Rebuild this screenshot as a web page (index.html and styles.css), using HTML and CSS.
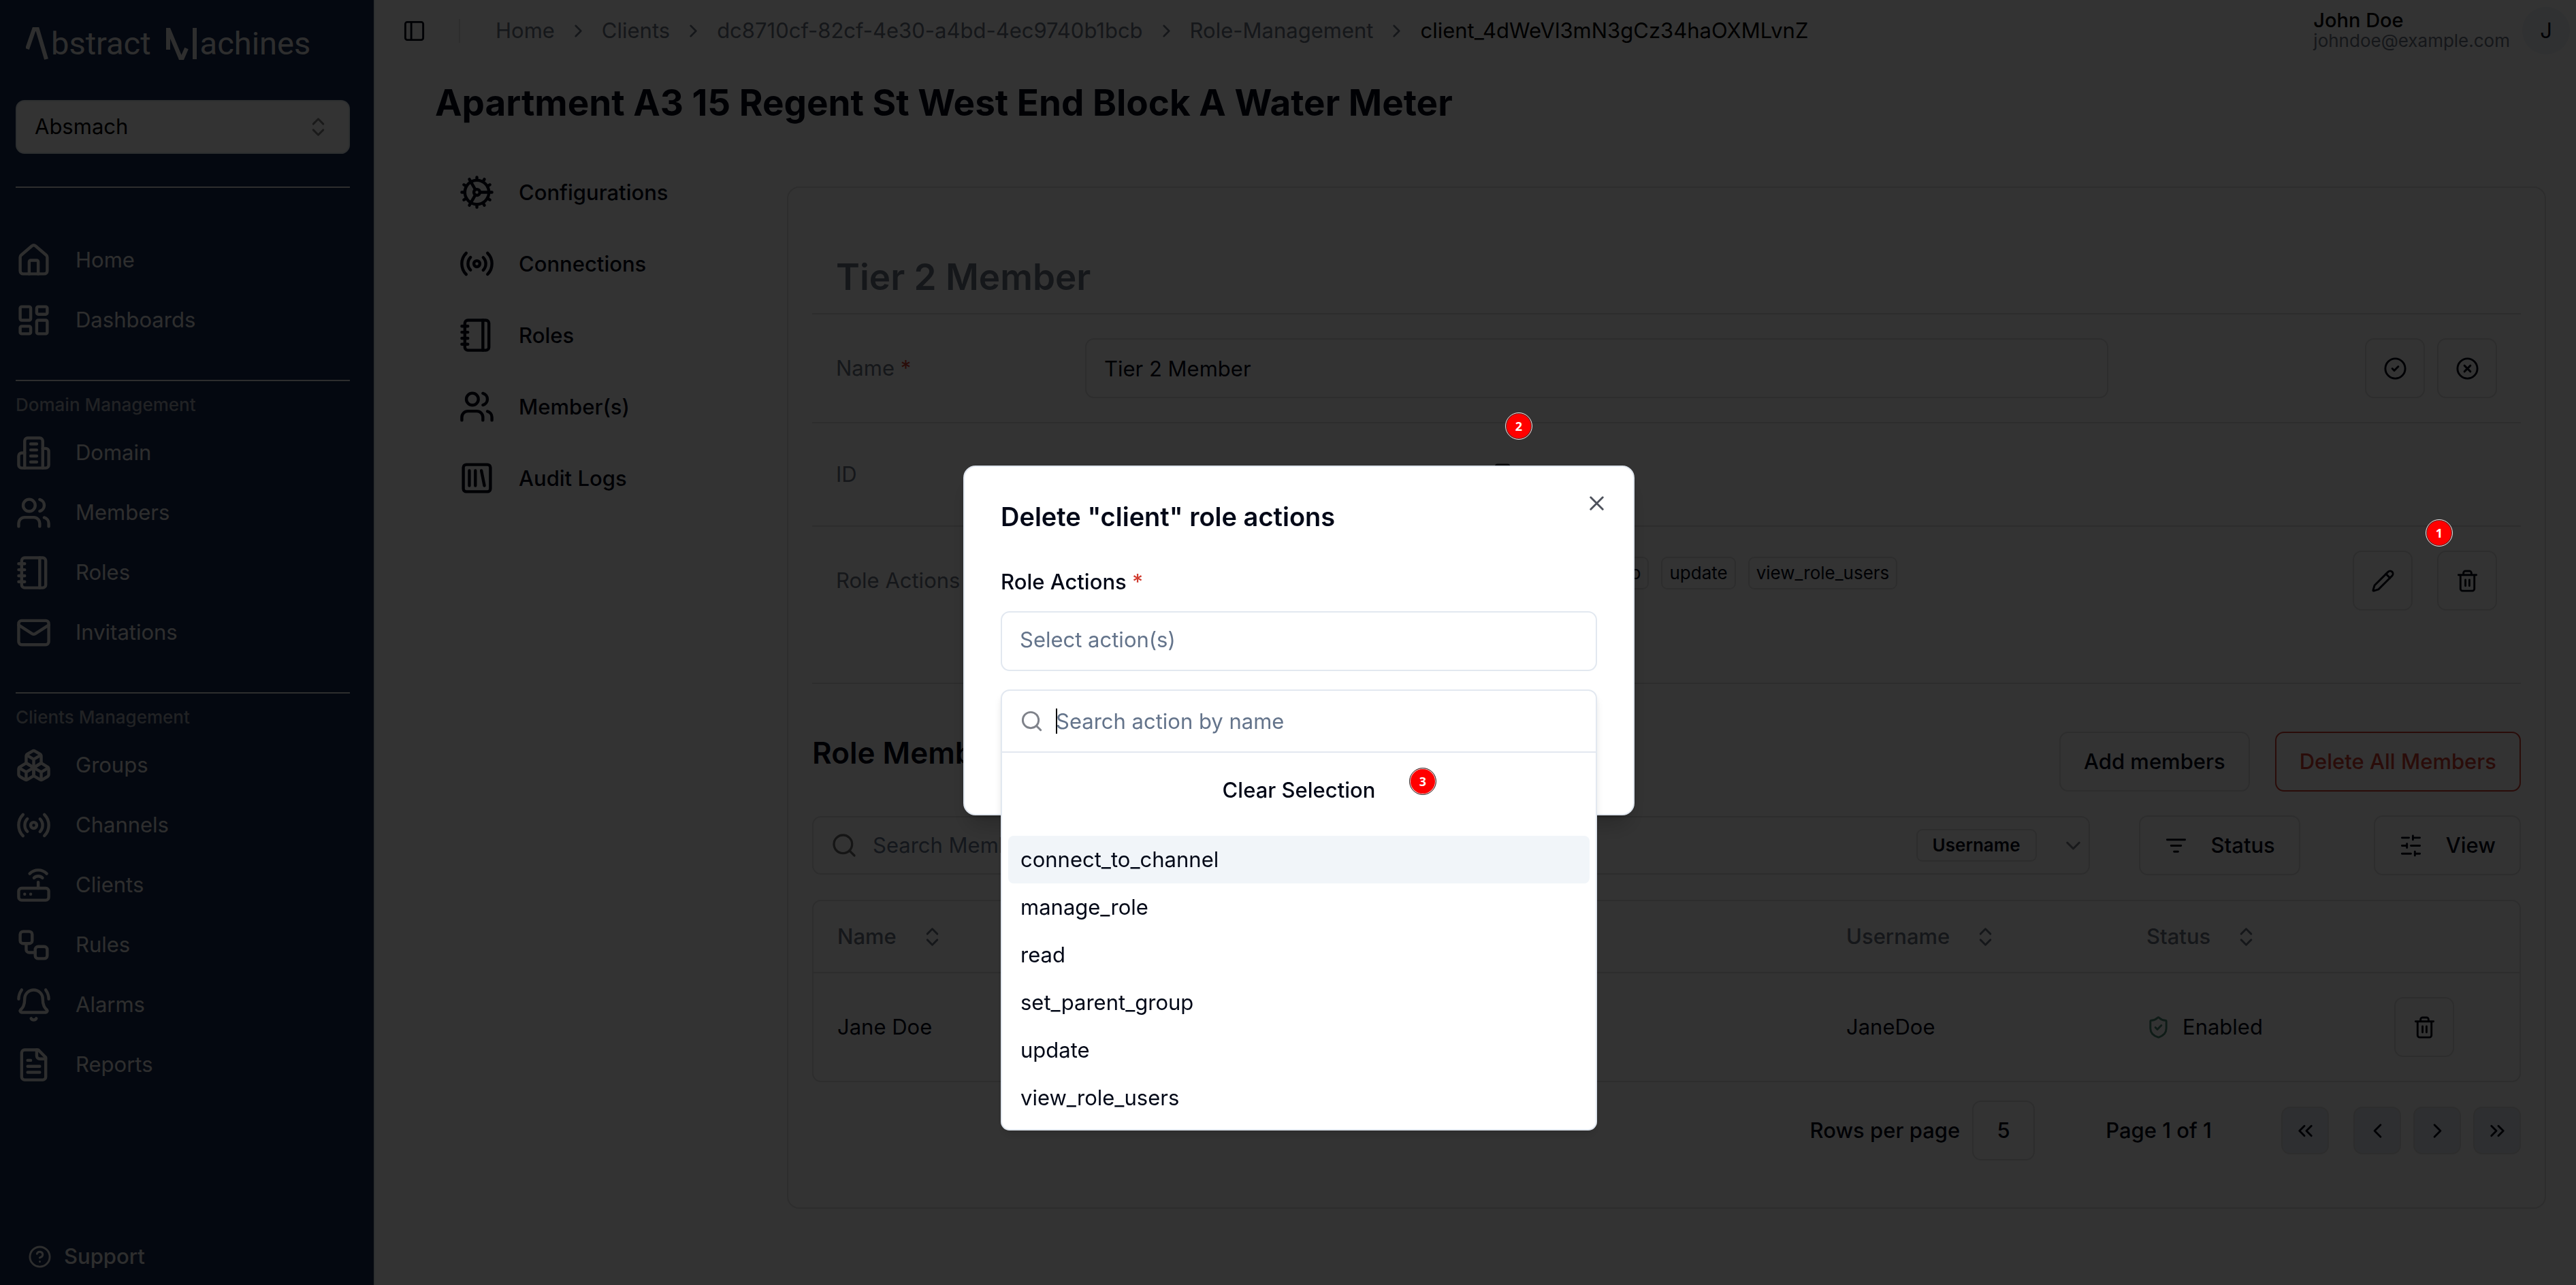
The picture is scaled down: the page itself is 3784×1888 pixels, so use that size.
FILE: index.html
```html
<!DOCTYPE html>
<html lang="en">
<head>
<meta charset="utf-8">
<title>Role actions</title>
<link rel="stylesheet" href="styles.css">
</head>
<body>
<svg width="0" height="0" class="sprite" aria-hidden="true">
  <symbol id="house" viewBox="0 0 24 24"><path d="M15 21v-8a1 1 0 0 0-1-1h-4a1 1 0 0 0-1 1v8"/><path d="M3 10a2 2 0 0 1 .709-1.528l7-5.999a2 2 0 0 1 2.582 0l7 5.999A2 2 0 0 1 21 10v9a2 2 0 0 1-2 2H5a2 2 0 0 1-2-2z"/></symbol>
  <symbol id="dashboard" viewBox="0 0 24 24"><rect width="7" height="9" x="3" y="3" rx="1"/><rect width="7" height="5" x="14" y="3" rx="1"/><rect width="7" height="9" x="14" y="12" rx="1"/><rect width="7" height="5" x="3" y="16" rx="1"/></symbol>
  <symbol id="building" viewBox="0 0 24 24"><path d="M6 22V4a2 2 0 0 1 2-2h8a2 2 0 0 1 2 2v18Z"/><path d="M6 12H4a2 2 0 0 0-2 2v6a2 2 0 0 0 2 2h2"/><path d="M18 9h2a2 2 0 0 1 2 2v9a2 2 0 0 1-2 2h-2"/><path d="M10 6h4M10 10h4M10 14h4M10 18h4"/></symbol>
  <symbol id="users" viewBox="0 0 24 24"><path d="M16 21v-2a4 4 0 0 0-4-4H6a4 4 0 0 0-4 4v2"/><circle cx="9" cy="7" r="4"/><path d="M22 21v-2a4 4 0 0 0-3-3.87"/><path d="M16 3.13a4 4 0 0 1 0 7.75"/></symbol>
  <symbol id="notebook" viewBox="0 0 24 24"><path d="M2 6h4M2 10h4M2 14h4M2 18h4"/><rect width="16" height="20" x="4" y="2" rx="2"/><path d="M16 2v20"/></symbol>
  <symbol id="mail" viewBox="0 0 24 24"><rect width="20" height="16" x="2" y="4" rx="2"/><path d="m22 7-8.97 5.7a1.94 1.94 0 0 1-2.06 0L2 7"/></symbol>
  <symbol id="boxes" viewBox="0 0 24 24"><path d="M2.97 12.92A2 2 0 0 0 2 14.63v3.24a2 2 0 0 0 .97 1.71l3 1.8a2 2 0 0 0 2.06 0L12 19v-5.5l-5-3-4.03 2.42Z"/><path d="m7 16.5-4.74-2.85M7 16.5l5-3M7 16.5v5.17"/><path d="M12 13.5V19l3.97 2.38a2 2 0 0 0 2.06 0l3-1.8a2 2 0 0 0 .97-1.71v-3.24a2 2 0 0 0-.97-1.71L17 10.5l-5 3Z"/><path d="m17 16.5-5-3M17 16.5l4.74-2.85M17 16.5v5.17"/><path d="M7.97 4.42A2 2 0 0 0 7 6.13v4.37l5 3 5-3V6.13a2 2 0 0 0-.97-1.71l-3-1.8a2 2 0 0 0-2.06 0l-3 1.8Z"/><path d="M12 8 7.26 5.15M12 8l4.74-2.85M12 13.5V8"/></symbol>
  <symbol id="radio" viewBox="0 0 24 24"><path d="M4.9 19.1C1 15.2 1 8.8 4.9 4.9"/><path d="M7.8 16.2c-2.3-2.3-2.3-6.1 0-8.5"/><circle cx="12" cy="12" r="2"/><path d="M16.2 7.8c2.3 2.3 2.3 6.1 0 8.5"/><path d="M19.1 4.9C23 8.8 23 15.1 19.1 19"/></symbol>
  <symbol id="router" viewBox="0 0 24 24"><rect width="20" height="8" x="2" y="14" rx="2"/><path d="M6.01 18H6M10.01 18H10M15 10v4"/><path d="M17.84 7.17a4 4 0 0 0-5.66 0"/><path d="M20.66 4.34a8 8 0 0 0-11.31 0"/></symbol>
  <symbol id="workflow" viewBox="0 0 24 24"><rect width="8" height="8" x="3" y="3" rx="2"/><path d="M7 11v4a2 2 0 0 0 2 2h4"/><rect width="8" height="8" x="13" y="13" rx="2"/></symbol>
  <symbol id="bell" viewBox="0 0 24 24"><path d="M10.268 21a2 2 0 0 0 3.464 0"/><path d="M22 8c0-2.3-.8-4.3-2-6"/><path d="M3.262 15.326A1 1 0 0 0 4 17h16a1 1 0 0 0 .74-1.673C19.41 13.956 18 12.499 18 8A6 6 0 0 0 6 8c0 4.499-1.411 5.956-2.738 7.326"/><path d="M4 2C2.8 3.7 2 5.7 2 8"/></symbol>
  <symbol id="file" viewBox="0 0 24 24"><path d="M15 2H6a2 2 0 0 0-2 2v16a2 2 0 0 0 2 2h12a2 2 0 0 0 2-2V7Z"/><path d="M14 2v4a2 2 0 0 0 2 2h4"/><path d="M10 9H8M16 13H8M16 17H8"/></symbol>
  <symbol id="help" viewBox="0 0 24 24"><circle cx="12" cy="12" r="10"/><path d="M9.09 9a3 3 0 0 1 5.83 1c0 2-3 3-3 3M12 17h.01"/></symbol>
  <symbol id="updown" viewBox="0 0 24 24"><path d="m7 15 5 5 5-5"/><path d="m7 9 5-5 5 5"/></symbol>
  <symbol id="panel" viewBox="0 0 24 24"><rect width="18" height="18" x="3" y="3" rx="2"/><path d="M9 3v18"/></symbol>
  <symbol id="right" viewBox="0 0 24 24"><path d="m9 18 6-6-6-6"/></symbol>
  <symbol id="left" viewBox="0 0 24 24"><path d="m15 18-6-6 6-6"/></symbol>
  <symbol id="down" viewBox="0 0 24 24"><path d="m6 9 6 6 6-6"/></symbol>
  <symbol id="first" viewBox="0 0 24 24"><path d="m11 17-5-5 5-5"/><path d="m18 17-5-5 5-5"/></symbol>
  <symbol id="last" viewBox="0 0 24 24"><path d="m6 17 5-5-5-5"/><path d="m13 17 5-5-5-5"/></symbol>
  <symbol id="cog" viewBox="0 0 24 24"><path d="M12 20a8 8 0 1 0 0-16 8 8 0 0 0 0 16Z"/><path d="M12 14a2 2 0 1 0 0-4 2 2 0 0 0 0 4Z"/><path d="M12 2v2M12 22v-2M17 20.66l-1-1.73M11 10.27 7 3.34M20.66 17l-1.73-1M3.34 7l1.73 1M14 12h8M2 12h2M20.66 7l-1.73 1M3.34 17l1.73-1M17 3.34l-1 1.73M11 13.73l-4 6.93"/></symbol>
  <symbol id="library" viewBox="0 0 24 24"><rect width="18" height="18" x="3" y="3" rx="2"/><path d="M7 7v10M11 7v10M15 7l2 10"/></symbol>
  <symbol id="check" viewBox="0 0 24 24"><circle cx="12" cy="12" r="10"/><path d="m9 12 2 2 4-4"/></symbol>
  <symbol id="cross" viewBox="0 0 24 24"><circle cx="12" cy="12" r="10"/><path d="m15 9-6 6M9 9l6 6"/></symbol>
  <symbol id="copy" viewBox="0 0 24 24"><rect width="14" height="14" x="8" y="8" rx="2"/><path d="M4 16c-1.1 0-2-.9-2-2V4c0-1.1.9-2 2-2h10c1.1 0 2 .9 2 2"/></symbol>
  <symbol id="pencil" viewBox="0 0 24 24"><path d="M21.174 6.812a1 1 0 0 0-3.986-3.987L3.842 16.174a2 2 0 0 0-.5.83l-1.321 4.352a.5.5 0 0 0 .623.622l4.353-1.32a2 2 0 0 0 .83-.497z"/><path d="m15 5 4 4"/></symbol>
  <symbol id="trash" viewBox="0 0 24 24"><path d="M3 6h18M19 6v14c0 1-1 2-2 2H7c-1 0-2-1-2-2V6M8 6V4c0-1 1-2 2-2h4c1 0 2 1 2 2v2M10 11v6M14 11v6"/></symbol>
  <symbol id="search" viewBox="0 0 24 24"><circle cx="11" cy="11" r="8"/><path d="m21 21-4.3-4.3"/></symbol>
  <symbol id="filter" viewBox="0 0 24 24"><path d="M3 6h18M7 12h10M10 18h4"/></symbol>
  <symbol id="sliders" viewBox="0 0 24 24"><path d="M21 4h-7M10 4H3M21 12h-9M8 12H3M21 20h-5M12 20H3M14 2v4M8 10v4M16 18v4"/></symbol>
  <symbol id="shield" viewBox="0 0 24 24"><path d="M20 13c0 5-3.5 7.5-7.66 8.95a1 1 0 0 1-.67-.01C7.5 20.5 4 18 4 13V6a1 1 0 0 1 1-1c2 0 4.5-1.2 6.24-2.72a1.17 1.17 0 0 1 1.52 0C14.51 3.81 17 5 19 5a1 1 0 0 1 1 1z"/><path d="m9 12 2 2 4-4"/></symbol>
  <symbol id="x" viewBox="0 0 24 24"><path d="M18 6 6 18M6 6l12 12"/></symbol>
</svg>

<div class="app">
  <aside class="sidebar">
    <div class="logo" aria-label="Abstract Machines">
      <svg class="logo-a" viewBox="0 0 33 48"><path d="M2 32 12 3h5l13 44"/></svg>
      <span>bstract</span>
      <svg class="logo-m" viewBox="0 0 45 48"><path d="M3 33V4h1l17 41h3l6-14M42 1v46"/></svg>
      <span>achines</span>
    </div>
    <div class="domain-select">
      <select aria-label="Domain"><option>Absmach</option></select>
      <svg class="icon"><use href="#updown"/></svg>
    </div>
    <hr>
    <nav class="nav-group nav-top">
      <a href="#"><svg class="icon-lg"><use href="#house"/></svg>Home</a>
      <a href="#"><svg class="icon-lg"><use href="#dashboard"/></svg>Dashboards</a>
    </nav>
    <hr>
    <h2>Domain Management</h2>
    <nav class="nav-group">
      <a href="#"><svg class="icon-lg"><use href="#building"/></svg>Domain</a>
      <a href="#"><svg class="icon-lg"><use href="#users"/></svg>Members</a>
      <a href="#"><svg class="icon-lg"><use href="#notebook"/></svg>Roles</a>
      <a href="#"><svg class="icon-lg"><use href="#mail"/></svg>Invitations</a>
    </nav>
    <hr>
    <h2>Clients Management</h2>
    <nav class="nav-group">
      <a href="#"><svg class="icon-lg"><use href="#boxes"/></svg>Groups</a>
      <a href="#"><svg class="icon-lg"><use href="#radio"/></svg>Channels</a>
      <a href="#"><svg class="icon-lg"><use href="#router"/></svg>Clients</a>
      <a href="#"><svg class="icon-lg"><use href="#workflow"/></svg>Rules</a>
      <a href="#"><svg class="icon-lg"><use href="#bell"/></svg>Alarms</a>
      <a href="#"><svg class="icon-lg"><use href="#file"/></svg>Reports</a>
    </nav>
    <a class="support" href="#"><svg class="icon"><use href="#help"/></svg>Support</a>
  </aside>

  <main>
    <header class="topbar">
      <button class="plain" aria-label="Toggle sidebar"><svg class="icon"><use href="#panel"/></svg></button>
      <span class="divider"></span>
      <nav class="crumbs" aria-label="Breadcrumb">
        <a href="#">Home</a><svg class="icon-sm"><use href="#right"/></svg>
        <a href="#">Clients</a><svg class="icon-sm"><use href="#right"/></svg>
        <a href="#">dc8710cf-82cf-4e30-a4bd-4ec9740b1bcb</a><svg class="icon-sm"><use href="#right"/></svg>
        <a href="#">Role-Management</a><svg class="icon-sm"><use href="#right"/></svg>
        <span class="current">client_4dWeVl3mN3gCz34haOXMLvnZ</span>
      </nav>
      <div class="user">
        <div class="user-text"><strong>John Doe</strong><span>johndoe@example.com</span></div>
        <span class="avatar">J</span>
      </div>
    </header>

    <h1>Apartment A3 15 Regent St West End Block A Water Meter</h1>

    <div class="columns">
      <nav class="subnav">
        <a href="#"><svg class="icon-lg"><use href="#cog"/></svg>Configurations</a>
        <a href="#"><svg class="icon-lg"><use href="#radio"/></svg>Connections</a>
        <a href="#"><svg class="icon-lg"><use href="#notebook"/></svg>Roles</a>
        <a href="#"><svg class="icon-lg"><use href="#users"/></svg>Member(s)</a>
        <a href="#"><svg class="icon-lg"><use href="#library"/></svg>Audit Logs</a>
      </nav>

      <section class="card">
        <table class="details">
          <colgroup><col class="col-label"><col><col class="col-actions"></colgroup>
          <thead><tr><th colspan="3">Tier 2 Member</th></tr></thead>
          <tbody>
            <tr>
              <th scope="row"><label for="role-name">Name <span class="req">*</span></label></th>
              <td><input id="role-name" class="field" type="text" value="Tier 2 Member"></td>
              <td><div class="actions">
                <button class="btn square" aria-label="Save"><svg class="icon"><use href="#check"/></svg></button>
                <button class="btn square" aria-label="Cancel"><svg class="icon"><use href="#cross"/></svg></button>
              </div></td>
            </tr>
            <tr class="id-row">
              <th scope="row">ID</th>
              <td><div class="id-value">client_4dWeVl3mN3gCz34haOXMLvnZ<button class="plain" aria-label="Copy"><svg class="icon"><use href="#copy"/></svg></button></div></td>
              <td></td>
            </tr>
            <tr class="actions-row">
              <th scope="row">Role Actions</th>
              <td><div class="tags"><span class="tag">connect_to_channel</span><span class="tag">manage_role</span><span class="tag">read</span><span class="tag">set_parent_group</span><span class="tag">update</span><span class="tag">view_role_users</span></div></td>
              <td><div class="actions wide">
                <button class="btn square" aria-label="Edit"><svg class="icon"><use href="#pencil"/></svg></button>
                <button class="btn square anchor" aria-label="Delete"><svg class="icon"><use href="#trash"/></svg><span class="callout callout-1">1</span></button>
              </div></td>
            </tr>
          </tbody>
        </table>

        <div class="members-head">
          <h2>Role Members</h2>
          <button class="btn">Add members</button>
          <button class="btn danger">Delete All Members</button>
        </div>

        <div class="toolbar">
          <div class="searchbox">
            <svg class="icon-md"><use href="#search"/></svg>
            <input type="search" aria-label="Search members" placeholder="Search Members">
            <button class="plain by"><span class="tag strong">Username</span><svg class="icon faint"><use href="#down"/></svg></button>
          </div>
          <button class="btn icon-text"><svg class="icon"><use href="#filter"/></svg>Status</button>
          <button class="btn icon-text view"><svg class="icon"><use href="#sliders"/></svg>View</button>
        </div>

        <table class="members">
          <colgroup><col><col class="col-user"><col class="col-status"><col class="col-del"></colgroup>
          <thead><tr>
            <th><button class="plain sort">Name<svg class="icon"><use href="#updown"/></svg></button></th>
            <th><button class="plain sort">Username<svg class="icon"><use href="#updown"/></svg></button></th>
            <th><button class="plain sort">Status<svg class="icon"><use href="#updown"/></svg></button></th>
            <th></th>
          </tr></thead>
          <tbody><tr>
            <td>Jane Doe</td>
            <td>JaneDoe</td>
            <td><div class="status"><svg class="icon"><use href="#shield"/></svg>Enabled</div></td>
            <td><button class="btn square" aria-label="Remove member"><svg class="icon"><use href="#trash"/></svg></button></td>
          </tr></tbody>
        </table>

        <div class="pager">
          <label for="rows">Rows per page</label>
          <select id="rows" class="rows"><option>5</option></select>
          <span class="page">Page 1 of 1</span>
          <button class="btn pg first" aria-label="First page"><svg class="icon"><use href="#first"/></svg></button>
          <button class="btn pg" aria-label="Previous page"><svg class="icon"><use href="#left"/></svg></button>
          <button class="btn pg" aria-label="Next page"><svg class="icon"><use href="#right"/></svg></button>
          <button class="btn pg" aria-label="Last page"><svg class="icon"><use href="#last"/></svg></button>
        </div>
      </section>
    </div>
  </main>
</div>

<div class="overlay">
  <div class="dialog" role="dialog" aria-labelledby="dlg-title">
    <span class="callout callout-2">2</span>
    <button class="plain close" aria-label="Close"><svg class="icon"><use href="#x"/></svg></button>
    <h2 id="dlg-title">Delete "client" role actions</h2>
    <div class="dlg-label" id="actions-label">Role Actions <span class="req">*</span></div>
    <div class="combo">
      <button class="field trigger" aria-haspopup="listbox" aria-expanded="true" aria-labelledby="actions-label">Select action(s)</button>
      <div class="popover">
        <div class="pop-search">
          <svg class="icon"><use href="#search"/></svg>
          <span class="caret"></span>
          <input type="text" aria-label="Search action" placeholder="Search action by name">
        </div>
        <button class="clear anchor">Clear Selection<span class="callout callout-3">3</span></button>
        <ul role="listbox">
          <li role="option" class="active">connect_to_channel</li>
          <li role="option">manage_role</li>
          <li role="option">read</li>
          <li role="option">set_parent_group</li>
          <li role="option">update</li>
          <li role="option">view_role_users</li>
        </ul>
      </div>
    </div>
  </div>
</div>
</body>
</html>
```
FILE: styles.css
```css
:root {
  --border: #e2e8f0;
  --line: #dfdfe0;
  --ink: #020817;
  --muted: #64748b;
  --gray: #6b7280;
  --red: #d13c30;
}
* { box-sizing: border-box; }
body {
  margin: 0;
  font: 400 31px/44px Inter, "Liberation Sans", sans-serif;
  color: var(--ink);
  background: #fff;
}
button, input, select {
  font: inherit;
  color: inherit;
  background: none;
  border: 0;
  padding: 0;
  margin: 0;
}
input::placeholder { color: var(--muted); opacity: 1; }
input:focus { outline: none; }
a { color: inherit; text-decoration: none; }
h1, h2 { margin: 0; }
svg { fill: none; stroke: currentColor; stroke-width: 2; stroke-linecap: round; stroke-linejoin: round; flex: none; }
.sprite { position: absolute; }
.icon { width: 35px; height: 35px; }
.icon-sm { width: 31px; height: 31px; }
.icon-md { width: 40px; height: 40px; }
.icon-lg { width: 53px; height: 53px; }
.req { color: var(--red); }
.plain { display: flex; align-items: center; }
.anchor { position: relative; }

.app { display: flex; min-height: 100vh; }

/* Sidebar */
.sidebar {
  width: 551px;
  flex: none;
  display: flex;
  flex-direction: column;
  padding: 36px 35px 20px 23px;
  background: #142850;
  color: #e5e5e5;
  border-right: 2px solid var(--border);
}
.sidebar hr { width: 100%; height: 2px; margin: 0; border: 0; background: #e5e5e5; flex: none; }
.sidebar h2 { font-size: 26px; font-weight: 500; line-height: 32px; margin: 19px 0 10px; color: #a3a8b2; }
.logo { display: flex; height: 56px; padding-left: 15px; font: 400 47px/56px Roboto, sans-serif; align-items: center; }
.logo svg { stroke-width: 6; stroke-linecap: butt; stroke-linejoin: miter; height: 48px; }
.logo-a { width: 33px; margin-right: 4px; }
.logo-m { width: 45px; margin: 0 5px 0 22px; }
.domain-select { position: relative; margin: 55px 0 48px; }
.domain-select select {
  display: block;
  width: 100%;
  height: 79px;
  padding: 0 26px 2px;
  appearance: none;
  background: #fff;
  color: #000;
  border: 2px solid var(--border);
  border-radius: 13px;
}
.domain-select svg { position: absolute; right: 29px; top: 22px; color: #808080; }
.nav-group a { display: flex; align-items: center; gap: 35px; height: 88px; }
.nav-group { margin-bottom: 44px; }
.nav-top { margin-top: 62px; }
.support { display: flex; align-items: center; gap: 18px; margin-top: auto; padding-left: 18px; font-weight: 500; }

/* Header */
main { flex: 1; min-width: 0; }
.topbar { display: flex; align-items: center; height: 90px; padding: 0 9px 0 40px; }
.divider { width: 2px; height: 35px; background: var(--line); margin: 0 52px 0 48px; }
.crumbs { display: flex; align-items: center; gap: 19px; color: var(--gray); }
.current { color: #000; }
.user { display: flex; align-items: center; gap: 18px; margin-left: auto; }
.user-text { display: flex; flex-direction: column; line-height: 30px; }
.user-text strong { font-size: 29px; font-weight: 500; color: #000; }
.user-text span { font-size: 26px; color: var(--gray); }
.avatar { width: 70px; height: 70px; border-radius: 50%; background: #eef3f8; line-height: 70px; text-align: center; }
h1 { font-size: 53px; line-height: 70px; font-weight: 700; margin: 26px 0 44px 88px; }

.columns { display: flex; padding: 0 44px 0 90px; align-items: flex-start; }
.subnav { width: 515px; flex: none; padding-left: 33px; font-weight: 500; }
.subnav a { display: flex; align-items: center; gap: 35px; height: 105px; }

/* Card */
.card {
  flex: 1;
  min-width: 0;
  margin-top: 44px;
  padding: 35px 35px 69px;
  border: 2px solid var(--line);
  border-radius: 18px;
}
.btn {
  display: inline-flex;
  align-items: center;
  justify-content: center;
  height: 88px;
  padding: 0 34px;
  border: 2px solid var(--line);
  border-radius: 13px;
  font-weight: 500;
}
.square { width: 88px; padding: 0; }
.field { width: 100%; height: 88px; padding: 0 26px; border: 2px solid var(--line); border-radius: 13px; display: block; }
table { width: 100%; table-layout: fixed; border-collapse: separate; border-spacing: 0; }
th { text-align: left; }

.details .col-label { width: 366px; }
.details .col-actions { width: 571px; }
.details th, .details td { padding: 35px; border-bottom: 2px solid var(--line); }
.details th { font-weight: 400; color: var(--gray); }
.details thead th { font-size: 53px; line-height: 70px; font-weight: 600; padding: 61px 35px 18px; }
.actions { display: flex; justify-content: flex-end; gap: 18px; }
.actions.wide { gap: 36px; }
.id-row { line-height: 80px; }
.id-value { display: flex; align-items: center; gap: 4px; padding-left: 26px; }
.actions-row { line-height: 88px; vertical-align: top; }
.actions-row th, .actions-row td { padding-bottom: 106px; }
.tags { display: flex; gap: 18px; padding: 9px 0 0 8px; }
.tag {
  height: 48px;
  padding: 0 10px;
  border: 2px solid var(--line);
  border-radius: 9px;
  font-size: 26px;
  line-height: 44px;
  white-space: nowrap;
}
.tag.strong { padding: 0 22px; font-weight: 600; }

.members-head { display: flex; align-items: flex-start; gap: 37px; margin: 70px 0 35px; }
.members-head h2 { flex: 1; font-size: 44px; line-height: 62px; font-weight: 600; }
.danger { color: var(--red); border-color: var(--red); }

.toolbar { display: flex; align-items: center; }
.searchbox {
  flex: 1;
  display: flex;
  align-items: center;
  height: 86px;
  padding: 0 5px 0 25px;
  margin-right: 72px;
  border: 2px solid var(--line);
  border-radius: 13px;
}
.searchbox > svg { color: #6b6b6b; }
.searchbox input { flex: 1; min-width: 0; margin: 0 22px; }
.by { gap: 36px; }
.faint { opacity: .5; }
.icon-text { gap: 34px; padding: 0 35px; }
.view { margin-left: 108px; }

.members { margin: 36px 0 27px; border: 2px solid var(--line); border-radius: 13px; }
.members .col-user { width: 441px; }
.members .col-status { width: 364px; }
.members .col-del { width: 219px; }
.members th { height: 106px; padding: 0 35px; border-bottom: 2px solid var(--line); font-weight: 500; color: var(--gray); }
.members td { padding: 35px; }
.members td .btn { display: flex; }
.sort { gap: 35px; }
.status { display: flex; align-items: center; gap: 18px; }
.status svg { color: #4c8a76; }

.pager { display: flex; align-items: center; justify-content: flex-end; gap: 18px; font-weight: 500; }
.rows { width: 92px; height: 88px; border: 2px solid var(--line); border-radius: 13px; appearance: none; text-align: center; text-align-last: center; }
.page { margin: 0 84px 0 86px; }
.pg { width: 70px; height: 70px; padding: 0; background: #e6ebf2; }
.first { margin-right: 18px; }

/* Dialog */
.overlay {
  position: fixed;
  inset: 0;
  z-index: 50;
  display: flex;
  align-items: center;
  justify-content: center;
  padding: 0 0 6px 32px;
  background: rgba(0, 0, 0, .8);
}
.dialog {
  --line: var(--border);
  position: relative;
  width: 986px;
  padding: 53px 53px 210px;
  background: #fff;
  border: 2px solid var(--border);
  border-radius: 18px;
  box-shadow: 0 22px 33px -7px rgba(0, 0, 0, .2), 0 9px 13px -9px rgba(0, 0, 0, .2);
}
.dialog h2 { font-size: 38px; line-height: 40px; font-weight: 600; margin-bottom: 54px; }
.close { position: absolute; top: 36px; right: 36px; opacity: .7; }
.dlg-label { font-weight: 500; margin-bottom: 21px; }
.combo { position: relative; }
.trigger { text-align: left; color: var(--muted); padding-bottom: 4px; }
.popover {
  position: absolute;
  top: 115px;
  left: 0;
  right: 0;
  padding-bottom: 11px;
  background: #fff;
  border: 2px solid var(--border);
  border-radius: 13px;
  box-shadow: 0 9px 13px -2px rgba(0, 0, 0, .1), 0 4px 9px -4px rgba(0, 0, 0, .1);
}
.pop-search { display: flex; align-items: center; height: 91px; padding: 0 26px; border-bottom: 2px solid var(--border); }
.pop-search svg { opacity: .5; margin-right: 18px; }
.caret { width: 2px; height: 37px; background: #000; margin-right: -2px; }
.pop-search input { flex: 1; min-width: 0; }
.clear { display: block; width: 100%; height: 88px; margin: 11px 0 23px; font-weight: 500; }
.popover ul { list-style: none; margin: 0; padding: 0 9px; }
.popover li { height: 70px; line-height: 70px; padding: 0 18px; border-radius: 8px; }
.popover li.active { background: #f1f5f9; }

/* Numbered callouts */
.callout {
  position: absolute;
  width: 40px;
  height: 40px;
  border: 1px solid #e5e5e5;
  box-shadow: inset 0 0 0 1px #333;
  border-radius: 50%;
  background: #f00;
  color: #fff;
  font: 700 18px/38px "Noto Sans", sans-serif;
  text-align: center;
}
.callout-1 { z-index: 60; top: -48px; left: -19px; }
.callout-2 { top: -80px; right: 148px; }
.callout-3 { top: 11px; right: 234px; border-color: #333; box-shadow: inset 0 0 0 1px #e5e5e5; }
```
